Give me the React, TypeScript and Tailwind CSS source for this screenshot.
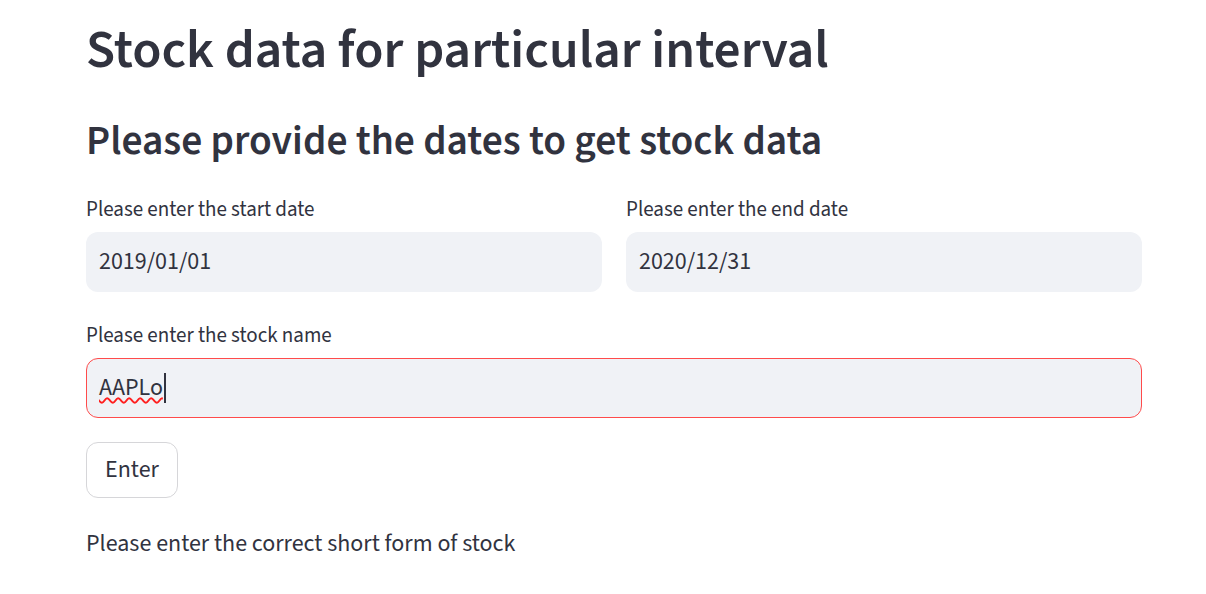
import React from "react";

export default function App() {
  return (
    <div className="min-h-[594px] w-full bg-white text-[#31333F] font-['Source_Sans_3','Source_Sans_Pro','Noto_Sans',sans-serif]">
      <div className="ml-[86px] flex w-[1056px] flex-col">
        <h1 className="mt-[18px] h-[65px] whitespace-nowrap text-[53.4px] font-semibold leading-[65px]">
          Stock data for particular interval
        </h1>
        <h2 className="mt-[34px] h-[50px] whitespace-nowrap text-[41.5px] font-semibold leading-[50px]">
          Please provide the dates to get stock data
        </h2>

        <div className="mt-[27px] grid grid-cols-2 gap-x-[24px]">
          <div className="flex flex-col">
            <label className="h-[30px] text-[21px] leading-[30px]">Please enter the start date</label>
            <div className="mt-[8px] flex h-[60px] items-center rounded-[12px] bg-[#f0f2f6] pl-[13px] text-[24px]">
              2019/01/01
            </div>
          </div>
          <div className="flex flex-col">
            <label className="h-[30px] text-[21px] leading-[30px]">Please enter the end date</label>
            <div className="mt-[8px] flex h-[60px] items-center rounded-[12px] bg-[#f0f2f6] pl-[13px] text-[24px]">
              2020/12/31
            </div>
          </div>
        </div>

        <label className="mt-[28px] h-[30px] text-[21px] leading-[30px]">Please enter the stock name</label>
        <div className="mt-[8px] flex h-[60px] items-center rounded-[12px] border border-[#ff4b4b] bg-[#f0f2f6] pl-[12px] text-[24px]">
          <span className="underline decoration-[#ff1f1f] decoration-wavy decoration-[1.5px] underline-offset-[2px]">AAPLo</span>
          <span className="ml-[1px] h-[30px] w-[2px] bg-[#31333F]" />
        </div>

        <div className="mt-[24px] flex">
          <button className="flex h-[56px] w-[92px] items-center justify-center rounded-[12px] border border-[#d6d6d9] bg-white text-[24px] text-[#31333F]">
            Enter
          </button>
        </div>

        <p className="mt-[28px] text-[24px] leading-[36px]">Please enter the correct short form of stock</p>
      </div>
    </div>
  );
}
